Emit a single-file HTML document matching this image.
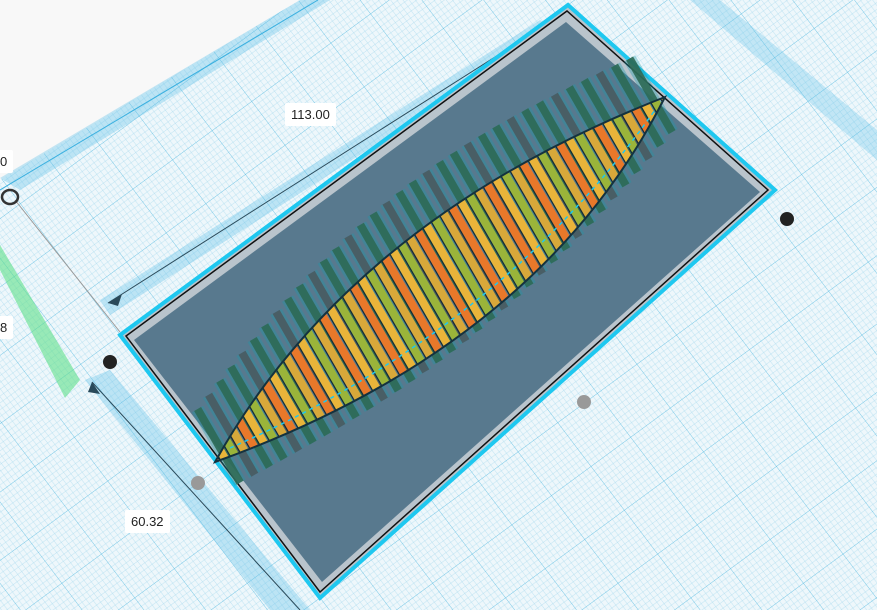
<!DOCTYPE html>
<html><head><meta charset="utf-8"><style>
html,body{margin:0;padding:0;width:877px;height:610px;overflow:hidden;background:#f8f8f8;font-family:"Liberation Sans",sans-serif}
svg{display:block}
.lbl{position:absolute;background:#fff;font-size:13px;color:#222;padding:4px 6px;border-radius:2px}
</style></head><body>
<svg id="s" width="877" height="610" viewBox="0 0 877 610" xmlns="http://www.w3.org/2000/svg">
<defs>
<pattern id="g" width="10" height="10" patternUnits="userSpaceOnUse" patternTransform="matrix(3.96,-2.92,3.33,4.38,120,335)">
<rect width="10" height="10" fill="#eef7fb"/>
<g stroke="#9fd6ec" stroke-width="0.06">
<path d="M1 0V10M2 0V10M3 0V10M4 0V10M5 0V10M6 0V10M7 0V10M8 0V10M9 0V10M0 1H10M0 2H10M0 3H10M0 4H10M0 5H10M0 6H10M0 7H10M0 8H10M0 9H10"/>
</g>
<path d="M0 0V10M0 0H10" stroke="#4fb8e0" stroke-width="0.15"/>
</pattern>
<clipPath id="leaf"><path d="M215 462 Q350 220 665 97 Q540 345 215 462Z"/></clipPath>
</defs>
<rect width="877" height="610" fill="#f8f8f8"/>
<polygon points="0,180 300,0 877,0 877,610 0,610" fill="url(#g)"/>
<polygon points="0,178 300,0 330,0 20,190" fill="#5ec0e8" opacity="0.35"/>
<line x1="0" y1="190" x2="318" y2="0" stroke="#3ab0e0" stroke-width="1"/>
<polygon points="690,0 720,0 877,130 877,160" fill="#5ec0e8" opacity="0.3"/>
<polygon points="100,300 540,20 555,30 110,315" fill="#5ec0e8" opacity="0.35"/>
<line x1="108" y1="303" x2="550" y2="22" stroke="#2a4a5a" stroke-width="1"/>
<polygon points="85,380 110,370 310,610 270,610" fill="#5ec0e8" opacity="0.35"/>
<line x1="92" y1="382" x2="300" y2="610" stroke="#2a4a5a" stroke-width="1"/>
<polygon points="0,270 0,245 80,380 65,398" fill="#5fe08a" opacity="0.6"/>
<line x1="15" y1="200" x2="120" y2="332" stroke="#999" stroke-width="1"/>
<polygon points="120,335 568,5 775,190 320,598" fill="#b9c4cc"/>
<polygon points="134,340 566,22 760,192 322,582" fill="#2f5a74" opacity="0.7"/>
<polygon points="120,335 568,5 775,190 320,598" fill="none" stroke="#1ec8f0" stroke-width="4"/>
<polygon points="126,336 567,11 768,190 320,592" fill="none" stroke="#111" stroke-width="1.5"/>
<g id="ribs"></g>
<g clip-path="url(#leaf)" id="stripes"></g>
<path d="M215 462 Q350 220 665 97 Q540 345 215 462Z" fill="none" stroke="#14323f" stroke-width="2"/>
<path d="M230 448 Q500 330 655 110" fill="none" stroke="#1ec8f0" stroke-width="1.5" stroke-dasharray="4 4"/>
<circle cx="110" cy="362" r="7" fill="#222"/>
<circle cx="787" cy="219" r="7" fill="#222"/>
<circle cx="584" cy="402" r="7" fill="#999"/>
<circle cx="198" cy="483" r="7" fill="#999"/>
<ellipse cx="10" cy="197" rx="8" ry="7" fill="none" stroke="#333" stroke-width="2.5"/>
<polygon points="108,303 122,294 118,306" fill="#2a4a5a"/>
<polygon points="92,382 100,394 88,392" fill="#2a4a5a"/>
</svg>
<div class="lbl" style="left:285px;top:103px">113.00</div>
<div class="lbl" style="left:125px;top:510px">60.32</div>
<div class="lbl" style="left:-6px;top:150px">0</div>
<div class="lbl" style="left:-6px;top:316px">8</div>
<script>
var NS="http://www.w3.org/2000/svg";
var ribs=document.getElementById("ribs"),st=document.getElementById("stripes");
var Ax=215,Ay=462,Bx=665,By=97,dx=0.5,dy=0.866;
function ln(p,x1,y1,x2,y2,c,w,op){var l=document.createElementNS(NS,"line");l.setAttribute("x1",x1);l.setAttribute("y1",y1);l.setAttribute("x2",x2);l.setAttribute("y2",y2);l.setAttribute("stroke",c);l.setAttribute("stroke-width",w);if(op)l.setAttribute("opacity",op);p.appendChild(l);return l;}
for(var i=0;i<34;i++){var t=0.02+i*0.96/33;var cx=Ax+(Bx-Ax)*t,cy=Ay+(By-Ay)*t;
var up=50+45*Math.sin(Math.PI*t),dn=30+35*Math.sin(Math.PI*t);
var sx=cx-dx*up,sy=cy-dy*up,ex=cx+dx*dn,ey=cy+dy*dn;
ln(ribs,sx,sy,ex,ey,"#1a9aa8",13,0.35);
ln(ribs,sx,sy,ex,ey,i%3==1?"#4a5a60":"#2d6a55",8,0.9);}
var cols=["#e8782a","#e9b43a","#9ab43a","#d8a83a"];
for(var j=0;j<56;j++){var t=j/55;var cx=Ax+(Bx-Ax)*t,cy=Ay+(By-Ay)*t;
ln(st,cx-dx*90,cy-dy*90,cx+dx*90,cy+dy*90,cols[j%4],8);
ln(st,cx-dx*90+4.5,cy-dy*90-3.6,cx+dx*90+4.5,cy+dy*90-3.6,"#1a2a30",1.2);}
</script>
</body></html>
